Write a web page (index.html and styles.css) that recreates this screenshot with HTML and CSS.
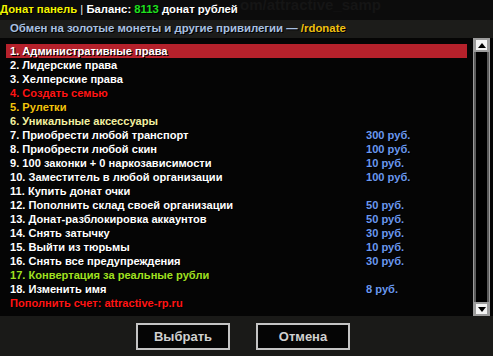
FILE: index.html
```html
<!DOCTYPE html>
<html>
<head>
<meta charset="utf-8">
<link rel="stylesheet" href="styles.css">
</head>
<body>
<div class="dialog">
  <div class="title">
    <span class="watermark">om/attractive_samp</span>
    <span class="title-text"><span class="t-yellow">Донат панель</span><span class="t-sep"> | </span><span class="t-white">Баланс: </span><span class="t-green">8113</span><span class="t-white"> донат рублей</span></span>
  </div>
  <div class="header">Обмен на золотые монеты и другие привилегии — <span class="gold">/rdonate</span></div>
  <div class="main">
    <div class="list">
      <div class="row selected"><span class="name">1. Административные права</span></div>
      <div class="row"><span class="name">2. Лидерские права</span></div>
      <div class="row"><span class="name">3. Хелперские права</span></div>
      <div class="row c-red"><span class="name">4. Создать семью</span></div>
      <div class="row c-orange"><span class="name">5. Рулетки</span></div>
      <div class="row c-cream"><span class="name">6. Уникальные аксессуары</span></div>
      <div class="row"><span class="name">7. Приобрести любой транспорт</span><span class="price">300 руб.</span></div>
      <div class="row"><span class="name">8. Приобрести любой скин</span><span class="price">100 руб.</span></div>
      <div class="row"><span class="name">9. 100 законки + 0 наркозависимости</span><span class="price">10 руб.</span></div>
      <div class="row"><span class="name">10. Заместитель в любой организации</span><span class="price">100 руб.</span></div>
      <div class="row"><span class="name">11. Купить донат очки</span></div>
      <div class="row"><span class="name">12. Пополнить склад своей организации</span><span class="price">50 руб.</span></div>
      <div class="row"><span class="name">13. Донат-разблокировка аккаунтов</span><span class="price">50 руб.</span></div>
      <div class="row"><span class="name">14. Снять затычку</span><span class="price">30 руб.</span></div>
      <div class="row"><span class="name">15. Выйти из тюрьмы</span><span class="price">10 руб.</span></div>
      <div class="row"><span class="name">16. Снять все предупреждения</span><span class="price">30 руб.</span></div>
      <div class="row c-lime"><span class="name">17. Конвертация за реальные рубли</span></div>
      <div class="row"><span class="name">18. Изменить имя</span><span class="price">8 руб.</span></div>
      <div class="row c-red"><span class="name">Пополнить счет: attractive-rp.ru</span></div>
    </div>
    <div class="scrollbar">
      <div class="sb-btn"><span class="tri-up"></span></div>
      <div class="sb-track"></div>
      <div class="sb-btn"><span class="tri-down"></span></div>
    </div>
  </div>
  <div class="footer">
    <div class="btn">Выбрать</div>
    <div class="btn">Отмена</div>
  </div>
</div>
</body>
</html>
```
FILE: styles.css
```css
* { box-sizing: border-box; }
html, body { margin: 0; padding: 0; }
body {
  width: 493px;
  height: 356px;
  overflow: hidden;
  background: #121211;
  font-family: "Liberation Sans", Arial, sans-serif;
  font-weight: bold;
}
.dialog { width: 493px; height: 356px; display: flex; flex-direction: column; }
.title {
  position: relative;
  height: 20px;
  line-height: 19px;
  font-size: 11.3px;
  background: #0c0c0c;
  white-space: nowrap;
  overflow: hidden;
}
.title-text { position: relative; text-shadow: 1px 1px 0 #000; }
.t-yellow { color: #f4f400; }
.t-sep { color: #e8e8e8; font-weight: normal; }
.t-white { color: #ffffff; }
.t-green { color: #1ee01e; }
.watermark {
  position: absolute;
  left: 240px;
  top: -5px;
  font-size: 15px;
  line-height: 20px;
  color: #151515;
}
.header {
  height: 18px;
  line-height: 17px;
  padding-left: 10px;
  font-size: 11.4px;
  color: #a8c0e0;
  background: #1c1c1a;
  white-space: nowrap;
  text-shadow: 1px 1px 0 #000;
}
.gold { color: #f0c010; }
.main {
  height: 278px;
  background: #050505;
  display: flex;
  justify-content: space-between;
}
.list { padding: 6px 0 0 6px; }
.row {
  width: 461px;
  height: 14px;
  line-height: 14px;
  padding-left: 4px;
  font-size: 11.1px;
  color: #ffffff;
  display: flex;
  white-space: nowrap;
  text-shadow: 1px 1px 0 #000;
}
.row .name { width: 356px; flex: none; }
.row .price { color: #6a98ee; }
.row.selected { background: #b5212b; }
.c-red { color: #ff1414; }
.c-orange { color: #f4c40c; }
.c-cream { color: #f2f0a0; }
.c-lime { color: #a0e020; }
.scrollbar {
  width: 17px;
  margin-right: 3px;
  display: flex;
  flex-direction: column;
  border-left: 1px solid #9c9c9c;
  border-right: 1px solid #9c9c9c;
}
.sb-btn {
  height: 14px;
  background: #f4f4f4;
  border: 2px solid #9c9c9c;
  display: flex;
  align-items: center;
  justify-content: center;
}
.sb-track { flex: 1; background: #000; border-left: 2px solid #5a5a5a; border-right: 2px solid #5a5a5a; }
.tri-up { width: 0; height: 0; border-left: 4px solid transparent; border-right: 4px solid transparent; border-bottom: 5px solid #000; }
.tri-down { width: 0; height: 0; border-left: 4px solid transparent; border-right: 4px solid transparent; border-top: 5px solid #000; }
.footer {
  flex: 1;
  background: #1a1a18;
  display: flex;
  justify-content: flex-start;
  gap: 26px;
  padding-top: 7px;
  padding-left: 136px;
}
.btn {
  width: 94px;
  height: 27px;
  border: 2px solid #c4c4c4;
  background: #050505;
  color: #d0d0d0;
  font-size: 13px;
  line-height: 23px;
  text-align: center;
}
```
